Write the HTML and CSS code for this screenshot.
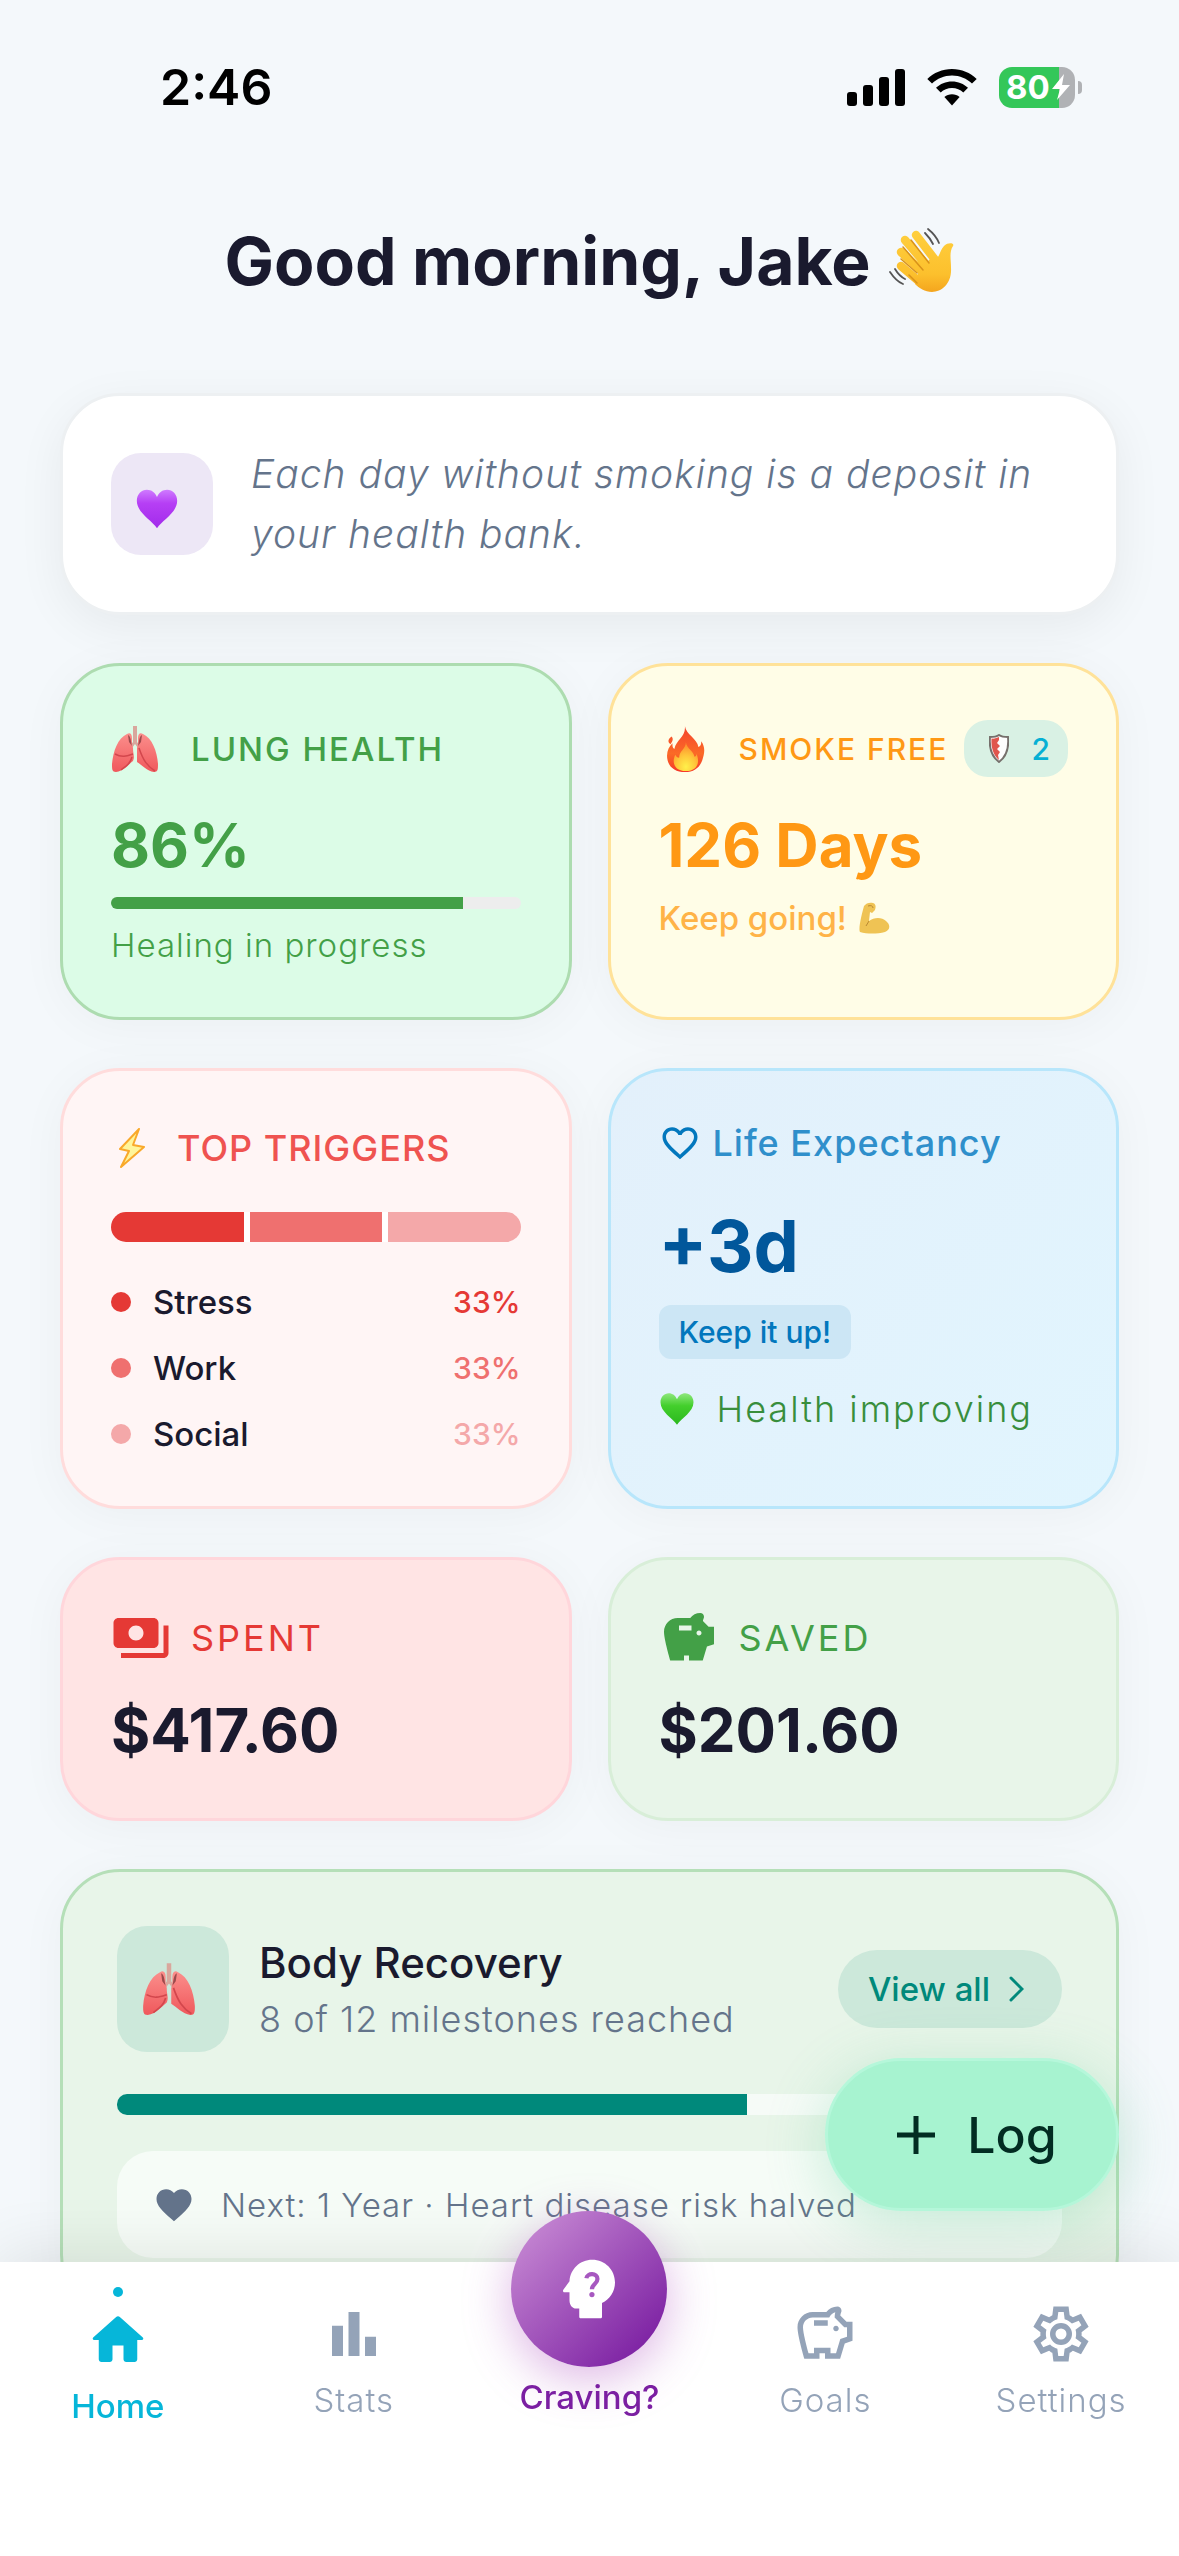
FILE: index.html
```html
<!DOCTYPE html>
<html lang="en">
<head>
<meta charset="utf-8">
<meta name="viewport" content="width=device-width, initial-scale=1">
<title>Smoke Free - Home</title>
<link rel="stylesheet" href="styles.css">
</head>
<body>
<svg class="defs" aria-hidden="true">
  <defs>
    <linearGradient id="skin" gradientUnits="userSpaceOnUse" x1="0" y1="0" x2="0" y2="66"><stop offset="0" stop-color="#ffd03f"/><stop offset=".7" stop-color="#fcc02d"/><stop offset="1" stop-color="#f3a21c"/></linearGradient>
    <linearGradient id="purple" x1="0" y1="0" x2="0" y2="1"><stop offset="0" stop-color="#cf7bff"/><stop offset=".35" stop-color="#b63ff5"/><stop offset="1" stop-color="#a22bea"/></linearGradient>
    <linearGradient id="green" x1="0" y1="0" x2="0" y2="1"><stop offset="0" stop-color="#8fe77d"/><stop offset=".4" stop-color="#43cf2c"/><stop offset="1" stop-color="#2bb81e"/></linearGradient>
    <linearGradient id="lung" x1="0" y1="0" x2="0" y2="1"><stop offset="0" stop-color="#fb8f8c"/><stop offset="1" stop-color="#f0585c"/></linearGradient>
    <linearGradient id="flame" x1="0" y1="0" x2="0" y2="1"><stop offset="0" stop-color="#f4442e"/><stop offset=".6" stop-color="#fb6a26"/><stop offset="1" stop-color="#f5372a"/></linearGradient>
    <radialGradient id="core" cx=".5" cy=".85" r=".8"><stop offset="0" stop-color="#fff04a"/><stop offset=".5" stop-color="#ffc53a"/><stop offset="1" stop-color="#fd8a2c"/></radialGradient>
    <symbol id="lungs" viewBox="0 0 48 48">
      <path d="M22 1h4v16l3 4-2 2-3-4-3 4-2-2 3-4z" fill="#d9a79d"/>
      <path d="M16 9c3-2 5 0 5 4v7l1 3c0 7 2 8 0 13-4 3-9 10-17 11-4 0-4-3-4-8C2 26 7 13 16 9z" fill="url(#lung)"/>
      <path d="M32 9c-3-2-5 0-5 4v7l-1 3v14c5 3 10 9 17 10 4 0 4-3 4-8C46 26 41 13 32 9z" fill="url(#lung)"/>
      <path d="M17 10c3 1 3 8 4 11l-3-4zM31 10c-3 1-3 8-4 11l3-4z" fill="#9c4a4c"/>
      <path d="M4 29c7 4 12 2 18 0M10 45c5-4 9-6 11-13M28 23c4 12 8 18 16 23" fill="none" stroke="#d3474d" stroke-width="1.500"/>
    </symbol>
    <symbol id="heart" viewBox="0 0 24 24">
      <path d="M12 22.500C9 18 1 14 1 7.500 1 4 3.500 1.500 6.500 1.500c2.500 0 4.500 1.500 5.500 4 1-2.500 3-4 5.500-4 3 0 5.500 2.500 5.500 6C23 14 15 18 12 22.500z"/>
    </symbol>
  </defs>
</svg>

<header class="status">
  <span class="status-time">2:46</span>
  <div class="status-icons">
    <svg class="signal" viewBox="0 0 58 38" aria-hidden="true"><rect y="24" width="10" height="14" rx="3"/><rect x="16" y="17" width="10" height="21" rx="3"/><rect x="32" y="9" width="10" height="29" rx="3"/><rect x="48" y="1" width="10" height="37" rx="3"/></svg>
    <svg class="wifi" viewBox="0 0 50 38" aria-hidden="true"><path d="M25 1c9.600 0 18.300 3.800 24.700 10L45 15.500C39.800 10.700 32.800 7.600 25 7.600S10.200 10.700 5 15.500L.3 11C6.700 4.800 15.400 1 25 1z"/><path d="M25 13.500c6.200 0 11.800 2.400 16 6.300L36.300 24.500c-3-2.700-6.900-4.400-11.300-4.400s-8.300 1.700-11.300 4.400L9 19.800c4.200-3.900 9.800-6.300 16-6.300z"/><path d="M25 26.300c2.900 0 5.500 1 7.600 2.700L25 37.500 17.400 29c2.100-1.700 4.700-2.700 7.600-2.700z"/></svg>
    <span class="battery"><span class="battery-level">80</span><svg class="battery-bolt" viewBox="0 0 18 26" aria-hidden="true"><path d="M12 0 0 15h8L5 26 18 11h-8z"/></svg></span>
  </div>
</header>

<main class="page">
  <h1 class="greeting">Good morning, Jake
    <svg class="wave" viewBox="0 0 66 66" aria-hidden="true">
      <path d="M27 7l20 26M16 12l24 28M12 24l24 22M12 38l20 17" fill="none" stroke="url(#skin)" stroke-width="8.500" stroke-linecap="round"/>
      <path d="M43 29c2 2 4 2 6 0 2-3 3-8 6-11 4-4 11-3 9 0-4 6-2 13-2 22 1 15-9 24-19 24-7 0-13-4-17-8l4-14z" fill="url(#skin)"/>
      <path d="M22 12l18 23M14 19l20 23M12 31l16 14M28 55l-8-8" fill="none" stroke="#d9921a" stroke-width="1.500" stroke-linecap="round"/>
      <path d="M39 1c5 4 9 9 11 14M36 5c3 3 6 7 8 11M1 44c4 6 8 10 13 12M6 41c3 5 6 8 10 10" fill="none" stroke="#555" stroke-width="1.800" stroke-linecap="round"/>
    </svg>
  </h1>

  <section class="card quote">
    <span class="quote-icon"><svg width="44" height="44" fill="url(#purple)" aria-hidden="true"><use href="#heart"/></svg></span>
    <p class="quote-text">Each day without smoking is a deposit in your health bank.</p>
  </section>

  <div class="grid">
    <section class="card lung">
      <h2 class="card-head tall"><svg class="emoji" aria-hidden="true"><use href="#lungs"/></svg><span class="label">LUNG HEALTH</span></h2>
      <p class="value">86%</p>
      <div class="bar" role="progressbar" aria-valuenow="86" aria-label="Lung health"><div class="bar-fill" style="width:86%"></div></div>
      <p class="note">Healing in progress</p>
    </section>

    <section class="card streak">
      <div class="card-head tall">
        <svg class="emoji" viewBox="-4 -1 50 50" aria-hidden="true"><path d="M23 0c1 9 13 13 14 22 3-1 3-4 3-6 5 7 3 14 1 20-3 8-9 12-18 12S7 44 5 36C3 28 6 22 10 18c0 3 0 5 2 6C14 14 24 12 23 0zM9 11c3 3 0 6-1 8-3-2-3-5 1-8z" fill="url(#flame)"/><path d="M24 17c1 7 8 9 9 15 2 0 2-2 2-3 4 9 1 18-11 18S9 38 13 30c1 2 2 3 4 3 0-7 7-9 7-16z" fill="url(#core)"/></svg>
        <h2 class="label small">SMOKE FREE</h2>
        <span class="shield-badge"><svg viewBox="0 0 20 29" width="20" height="29" aria-hidden="true"><path d="M10 1c3 2 6 2 9 2 1 10-1 19-9 25C2 22 0 13 1 3c3 0 6 0 9-2z" fill="#fdfdfd" stroke="#76706c" stroke-width="2"/><path d="M10 3v3l-2 3 3 3-3 3 3 3-2 3 1 5C4 21 2 13 2.500 4.500 5 5 8 4 10 3z" fill="#e0564d"/></svg>2</span>
      </div>
      <p class="value">126 Days</p>
      <p class="note strong">Keep going!
        <svg class="biceps" viewBox="0 0 32 32" aria-hidden="true"><path d="M5 4c2-3 6-4 9-3 3 1 3 4 2 7l-3 3-2-1-1 9c5-4 13-4 17 0 5 4 4 9-1 11-8 2-18 2-25 0C-1 27 3 11 5 4z" fill="#efc354"/><path d="M9 4c3-1 5 0 5 2M10 19l-3 5" fill="none" stroke="#b98a33" stroke-width="1"/></svg></p>
    </section>

    <section class="card triggers">
      <h2 class="card-head"><svg class="bolt" viewBox="0 0 28 40" aria-hidden="true"><path d="M21 1 2 21l9 2-8 16 23-20-11-2z" fill="#fff59a" stroke="#f9a92b" stroke-width="2" stroke-linejoin="round"/></svg><span class="label large">TOP TRIGGERS</span></h2>
      <div class="segments"><span class="tone-1"></span><span class="tone-2"></span><span class="tone-3"></span></div>
      <ul class="trigger-list">
        <li><i class="dot tone-1"></i><span>Stress</span><b class="pct ink-1">33%</b></li>
        <li><i class="dot tone-2"></i><span>Work</span><b class="pct ink-2">33%</b></li>
        <li><i class="dot tone-3"></i><span>Social</span><b class="pct ink-3">33%</b></li>
      </ul>
    </section>

    <section class="card life">
      <h2 class="life-head"><svg width="42" height="42" viewBox="0 0 24 24" fill="#0277bd" aria-hidden="true"><path d="M16.500 3c-1.740 0-3.410.81-4.500 2.090C10.910 3.810 9.240 3 7.500 3 4.420 3 2 5.420 2 8.500c0 3.780 3.400 6.860 8.550 11.540L12 21.350l1.450-1.320C18.600 15.360 22 12.280 22 8.500 22 5.420 19.580 3 16.500 3zm-4.400 15.550-.1.100-.1-.1C7.140 14.240 4 11.390 4 8.500 4 6.500 5.500 5 7.500 5c1.540 0 3.040.99 3.570 2.360h1.870C13.460 5.990 14.960 5 16.500 5c2 0 3.500 1.500 3.500 3.500 0 2.890-3.140 5.740-7.900 10.050z"/></svg>Life Expectancy</h2>
      <p class="life-value">+3d</p>
      <span class="chip">Keep it up!</span>
      <p class="improving"><svg width="36" height="36" fill="url(#green)" aria-hidden="true"><use href="#heart"/></svg>Health improving</p>
    </section>

    <section class="card spent">
      <h2 class="card-head money"><svg class="icon" viewBox="0 0 24 24" aria-hidden="true"><path d="M19 14V6c0-1.100-.9-2-2-2H3c-1.100 0-2 .9-2 2v8c0 1.100.9 2 2 2h14c1.100 0 2-.9 2-2zm-9-1c-1.660 0-3-1.340-3-3s1.340-3 3-3 3 1.340 3 3-1.340 3-3 3zm13-6v11c0 1.100-.9 2-2 2H4v-2h17V7h2z"/></svg>SPENT</h2>
      <p class="value">$417.60</p>
    </section>

    <section class="card saved">
      <h2 class="card-head money"><svg class="icon" viewBox="0 0 24 24" aria-hidden="true"><path d="m19.830 7.500-2.270-2.270c.07-.42.18-.81.32-1.150.08-.18.12-.37.12-.58 0-.83-.67-1.500-1.500-1.500-1.640 0-3.090.79-4 2h-5C4.460 4 2 6.460 2 9.500S4.500 21 4.500 21H10v-2h2v2h5.500l1.680-5.590 2.820-.94V7.500h-2.170zM13 9H8V7h5v2zm3 2c-.55 0-1-.45-1-1s.45-1 1-1 1 .45 1 1-.45 1-1 1z"/></svg>SAVED</h2>
      <p class="value">$201.60</p>
    </section>
  </div>

  <section class="card recovery">
    <div class="recovery-head">
      <span class="recovery-icon"><svg width="54" height="54" aria-hidden="true"><use href="#lungs"/></svg></span>
      <div class="recovery-text">
        <h2 class="recovery-title">Body Recovery</h2>
        <p class="recovery-sub">8 of 12 milestones reached</p>
      </div>
      <a class="view-all" href="#recovery">View all<svg width="16" height="26" viewBox="0 0 16 26" aria-hidden="true"><path d="m3 2 11 11L3 24"/></svg></a>
    </div>
    <div class="bar thick" role="progressbar" aria-valuenow="67" aria-label="Body recovery"><div class="bar-fill" style="width:66.67%"></div></div>
    <p class="next"><svg width="42" height="42" viewBox="0 0 24 24" aria-hidden="true"><path d="m12 21.350-1.450-1.320C5.400 15.360 2 12.280 2 8.500 2 5.420 4.420 3 7.500 3c1.740 0 3.410.81 4.500 2.090C13.090 3.810 14.760 3 16.500 3 19.580 3 22 5.420 22 8.500c0 3.780-3.400 6.860-8.550 11.540L12 21.350z"/></svg>Next: 1 Year · Heart disease risk halved</p>
  </section>
</main>

<button class="log" type="button"><svg width="42" height="42" viewBox="0 0 42 42" aria-hidden="true"><path d="M21 2v38M2 21h38"/></svg>Log</button>

<nav class="tabs" aria-label="Main">
  <a class="tab active" href="#home" aria-current="page"><i class="tab-dot"></i><svg viewBox="0 0 24 24" aria-hidden="true"><path d="M10 19v-5h4v5c0 .55.45 1 1 1h3c.55 0 1-.45 1-1v-7h1.700c.46 0 .68-.57.33-.87L12.670 3.600c-.38-.34-.96-.34-1.340 0l-8.360 7.530c-.34.3-.13.87.33.87H5v7c0 .55.45 1 1 1h3c.55 0 1-.45 1-1z"/></svg>Home</a>
  <a class="tab" href="#stats"><svg viewBox="0 0 24 24" aria-hidden="true"><path d="M4 9h4v11H4zM16 13h4v7h-4zM10 4h4v16h-4z"/></svg>Stats</a>
  <a class="tab craving" href="#craving"><span class="craving-circle"><svg viewBox="0 0 24 24" aria-hidden="true"><path d="M13 3C9.200 3 6.200 5.900 6 9.600l-1.900 2.600c-.3.400 0 .8.400.8H6v2.500C6 17 7 18 8 18h1v2.500c0 .3.200.5.500.5h6c.3 0 .5-.2.500-.5v-4.200c2.400-1.100 4-3.600 4-6.300 0-3.900-3.100-7-7-7z" fill="#fff"/><path d="M11.200 8.700c.2-1.700 3.400-1.700 3.400.2 0 1.600-1.700 1.500-1.700 3.200" fill="none" stroke="#a758c0" stroke-width="1.300"/><circle cx="12.900" cy="13.700" r=".8" fill="#a758c0"/></svg></span>Craving?</a>
  <a class="tab" href="#goals"><svg viewBox="0 0 24 24" aria-hidden="true"><path d="M15 10c0-.55.45-1 1-1s1 .45 1 1-.45 1-1 1-1-.45-1-1zM8 9h5V7H8v2zm14-1.500v6.970l-2.820.94L17.500 21H12v-2h-2v2H4.500S2 12.540 2 9.500 4.460 4 7.500 4h5c.91-1.210 2.360-2 4-2 .83 0 1.500.67 1.500 1.500 0 .21-.04.4-.12.58-.14.34-.26.73-.32 1.150l2.270 2.270H22zm-2 2h-1l-3.500-3.500c0-.65.09-1.290.24-1.910-.97.26-1.810.93-2.190 1.910H7.500C5.570 6 4 7.570 4 9.500c0 1.880 1.220 6.650 2.010 9.500H8v-2h6v2h2.010l1.550-5.150 2.440-.82V9.500z"/></svg>Goals</a>
  <a class="tab" href="#settings"><svg viewBox="0 0 24 24" aria-hidden="true"><path fill-rule="evenodd" d="m9.250 22-.4-3.200q-.325-.125-.612-.3t-.563-.375L4.700 19.375l-2.750-4.750 2.575-1.950Q4.500 12.500 4.500 12.338v-.675q0-.163.025-.338L1.950 9.375l2.750-4.750 2.975 1.250q.275-.2.575-.375t.6-.3l.4-3.200h5.500l.4 3.200q.325.125.613.3t.562.375l2.975-1.250 2.750 4.750-2.575 1.950q.025.175.025.338v.674q0 .163-.05.338l2.575 1.950-2.750 4.750-2.950-1.250q-.275.2-.575.375t-.6.3l-.4 3.200zM11 20h1.975l.35-2.650q.775-.2 1.438-.587t1.212-.938l2.475 1.025.975-1.700-2.150-1.625q.125-.35.175-.737T17.500 12t-.05-.787-.175-.738l2.150-1.625-.975-1.700-2.475 1.050q-.55-.575-1.212-.962t-1.438-.588L13 4h-1.975l-.35 2.650q-.775.2-1.437.588t-1.213.937L5.550 7.150l-.975 1.700 2.150 1.600q-.125.375-.175.75t-.05.8q0 .4.05.775t.175.75l-2.150 1.625.975 1.700 2.475-1.050q.55.575 1.213.963t1.437.587z"/><circle cx="12" cy="12" r="3" fill="none" stroke="currentColor" stroke-width="2"/></svg>Settings</a>
</nav>
</body>
</html>
```
FILE: styles.css
```css
* { box-sizing: border-box; }

body {
  margin: 0;
  min-height: 100vh;
  background: #f4f8fb;
  color: #1a1a2e;
  font-family: Inter, "Liberation Sans", sans-serif;
  font-size: 33px;
}

h1, h2, p, ul { margin: 0; padding: 0; font-weight: 400; }
ul { list-style: none; }
svg { display: block; flex: none; }
a { color: inherit; text-decoration: none; }
.defs { position: absolute; width: 0; height: 0; }

/* Status bar */
.status {
  display: flex;
  justify-content: space-between;
  align-items: center;
  height: 174px;
  padding: 0 104px 0 160px;
  color: #000;
}
.status-time { font-size: 50px; font-weight: 600; }
.status-icons { display: flex; align-items: center; gap: 22px; }
.signal { width: 58px; height: 38px; }
.wifi { width: 50px; height: 38px; }
.battery {
  position: relative;
  display: flex;
  align-items: center;
  gap: 2px;
  width: 76px;
  height: 41px;
  padding-left: 7px;
  border-radius: 13px;
  background: linear-gradient(90deg, #34c759 60px, #b0b2b5 60px);
  color: #fff;
}
.battery::after {
  content: "";
  position: absolute;
  right: -7px;
  top: 14px;
  width: 4px;
  height: 13px;
  border-radius: 0 4px 4px 0;
  background: #b0b2b5;
}
.battery-level { font-size: 33px; font-weight: 700; }
.battery-bolt { width: 18px; height: 26px; fill: #fff; }

/* Page */
.page { padding: 42px 60px 200px; }
.greeting {
  display: flex;
  justify-content: center;
  align-items: center;
  gap: 18px;
  margin-bottom: 87px;
  font-size: 66px;
  line-height: 90px;
  font-weight: 700;
}
.wave { width: 66px; height: 66px; }

.card {
  border: 3px solid;
  border-radius: 60px;
  padding: 48px;
  box-shadow: 0 6px 48px rgba(0, 0, 0, .04);
}
.grid {
  display: grid;
  grid-template-columns: 1fr 1fr;
  gap: 48px 36px;
  margin: 48px 0;
}

/* Quote */
.quote {
  display: flex;
  align-items: center;
  gap: 38px;
  background: #fff;
  border-color: #edf0f2;
  box-shadow: 0 12px 48px rgba(0, 0, 0, .06);
}
.quote-icon {
  display: flex;
  flex: none;
  align-items: center;
  justify-content: center;
  width: 102px;
  height: 102px;
  padding: 10px 10px 0 0;
  border-radius: 30px;
  background: #ede7f6;
}
.quote-text {
  color: #64748b;
  font-size: 39px;
  line-height: 60px;
  font-weight: 300;
  font-style: italic;
  letter-spacing: 1px;
}

/* Stat cards */
.card-head { display: flex; align-items: center; height: 57px; }
.card-head.tall { height: 69px; margin-bottom: 24px; }
.emoji { width: 48px; height: 48px; margin-right: 32px; }
.label { font-size: 33px; font-weight: 500; letter-spacing: 2px; white-space: nowrap; }
.label.small { font-size: 30px; }
.label.large { font-size: 36px; letter-spacing: 1px; }
.value { font-size: 60px; line-height: 76px; font-weight: 700; }
.note { font-size: 33px; line-height: 48px; font-weight: 300; letter-spacing: 1px; }
.note.strong { display: flex; align-items: center; gap: 12px; margin-top: 11px; font-weight: 500; letter-spacing: 0; color: #ffb347; }
.biceps { width: 32px; height: 32px; }

.bar { height: 12px; border-radius: 6px; overflow: hidden; background: #ededed; }
.bar-fill { height: 100%; background: currentColor; }
.lung { background: #dcfce7; border-color: #addcb0; color: #43a047; }
.lung .bar { margin: 14px 0 12px; }

.streak { background: #fffde7; border-color: #ffe299; color: #ff9814; }
.shield-badge {
  display: flex;
  flex: none;
  align-items: center;
  justify-content: space-between;
  width: 104px;
  height: 57px;
  margin-left: auto;
  padding: 0 18px 0 25px;
  border-radius: 24px;
  background: #d9f1e4;
  color: #06b0d4;
  font-size: 30px;
  font-weight: 500;
}

.triggers { background: #fff5f5; border-color: #ffdcdc; color: #ef5350; }
.bolt { width: 42px; height: 40px; margin-right: 24px; }
.segments { display: flex; gap: 6px; height: 30px; margin: 36px 0; border-radius: 15px; overflow: hidden; background: #fff; }
.segments span { flex: 1; }
.tone-1 { background: #e53935; }
.tone-2 { background: #ef706f; }
.tone-3 { background: #f4a8a9; }
.ink-1 { color: #e53935; }
.ink-2 { color: #ef706f; }
.ink-3 { color: #f4a8a9; }
.trigger-list { display: grid; gap: 18px; color: #1a1a2e; }
.trigger-list li { display: flex; align-items: center; height: 48px; font-weight: 500; }
.dot { width: 20px; height: 20px; margin-right: 22px; border-radius: 50%; }
.pct { margin-left: auto; font-size: 30px; font-weight: 500; }

.life { background: linear-gradient(135deg, #e3f0fb, #e1f5fe); border-color: #b8e6fb; color: #0277bd; }
.life-head { display: flex; align-items: center; gap: 12px; height: 48px; font-size: 36px; font-weight: 500; letter-spacing: 1px; color: #2f8fcb; }
.life-value { margin: 36px 0 16px; color: #01579b; font-size: 72px; line-height: 86px; font-weight: 700; }
.chip { display: inline-block; padding: 0 20px; border-radius: 12px; background: #cce6f5; font-size: 30px; line-height: 54px; font-weight: 500; }
.improving { display: flex; align-items: center; gap: 22px; margin-top: 24px; color: #388e3c; font-size: 36px; line-height: 52px; font-weight: 300; letter-spacing: 2px; }

.money { height: 60px; gap: 20px; margin-bottom: 24px; font-size: 36px; letter-spacing: 3px; }
.icon { width: 60px; height: 60px; fill: currentColor; }
.spent .value, .saved .value { margin-bottom: 2px; }
.spent { background: #ffe4e4; border-color: #ffd6db; }
.saved { background: #e8f5e9; border-color: #d8eed8; }
.spent .money { color: #e53935; }
.saved .money { color: #43a047; }

/* Body recovery */
.recovery { padding: 54px; background: #e8f5e9; border-color: #b5dfb8; }
.recovery-head { display: flex; align-items: center; gap: 30px; }
.recovery-icon {
  display: flex;
  align-items: center;
  justify-content: center;
  width: 112px;
  height: 126px;
  padding-right: 9px;
  border-radius: 30px;
  background: #cce8da;
}
.recovery-text { flex: 1; }
.recovery-title { font-size: 42px; line-height: 60px; font-weight: 500; }
.recovery-sub { color: #64748b; font-size: 36px; line-height: 52px; font-weight: 300; letter-spacing: 1px; }
.view-all {
  display: flex;
  align-items: center;
  gap: 18px;
  height: 78px;
  padding: 0 38px 0 30px;
  border-radius: 39px;
  background: #cce8da;
  color: #00897b;
  font-weight: 500;
}
.view-all svg, .log svg { fill: none; stroke: currentColor; stroke-width: 3; stroke-linecap: round; }
.bar.thick { height: 21px; margin: 42px 0 36px; border-radius: 10px; background: #f6fbf7; color: #00897b; }
.next {
  display: flex;
  align-items: center;
  gap: 26px;
  height: 107px;
  padding: 0 36px;
  border-radius: 36px;
  background: #f6fcf7;
  color: #64748b;
  font-weight: 300;
  letter-spacing: 1px;
}
.next svg { fill: currentColor; }

/* Floating log button */
.log {
  position: fixed;
  right: 60px;
  bottom: 345px;
  display: flex;
  align-items: center;
  justify-content: center;
  gap: 30px;
  width: 294px;
  height: 153px;
  padding: 0 0 0 8px;
  border: 3px solid #b5f7da;
  border-radius: 77px;
  background: #a7f3d0;
  box-shadow: 0 12px 60px rgba(80, 200, 140, .3);
  color: #022c22;
  font: 500 50px Inter, "Liberation Sans", sans-serif;
}
.log svg { stroke-width: 5; stroke-linecap: butt; }

/* Bottom tabs */
.tabs {
  position: fixed;
  left: 0;
  right: 0;
  bottom: 0;
  display: grid;
  grid-template-columns: repeat(5, 1fr);
  height: 294px;
  background: #fff;
  box-shadow: 0 -6px 60px rgba(0, 0, 0, .1);
}
.tab {
  display: flex;
  flex-direction: column;
  align-items: center;
  padding-top: 39px;
  color: #94a3b8;
  line-height: 66px;
  font-weight: 300;
  letter-spacing: 1px;
}
.tab svg { width: 66px; height: 66px; fill: currentColor; }
.tab.active { padding-top: 25px; color: #06b6d9; font-weight: 500; letter-spacing: 0; }
.tab-dot { width: 10px; height: 10px; margin-bottom: 10px; border-radius: 50%; background: currentColor; }
.tab.craving { padding-top: 0; margin-top: -51px; line-height: 60px; color: #7b1fa2; font-weight: 500; letter-spacing: 0; }
.craving-circle {
  display: flex;
  align-items: center;
  justify-content: center;
  width: 156px;
  height: 156px;
  border-radius: 50%;
  background: linear-gradient(135deg, #ce93d8, #7b1fa2 90%);
  box-shadow: 0 12px 48px rgba(171, 71, 188, .4);
}
.tab .craving-circle svg { width: 78px; height: 78px; }
```
